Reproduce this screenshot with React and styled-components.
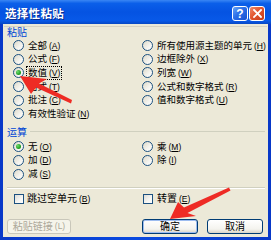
import React from "react";
import styled, { createGlobalStyle } from "styled-components";

const GlobalStyle = createGlobalStyle`
  html, body { margin: 0; padding: 0; background: #fff; }
  body { font-family: "Noto Sans CJK SC", "Noto Sans", sans-serif; }
  * { box-sizing: border-box; }
`;

const Window = styled.div`
  position: relative;
  width: 271px;
  height: 240px;
  display: flex;
  flex-direction: column;
  background: linear-gradient(to right, #0838c8, #0a4ae0 50%, #0838c8);
  overflow: hidden;
`;

const TitleBar = styled.div`
  height: 24px;
  flex: none;
  display: flex;
  align-items: flex-start;
  padding: 0 6px 0 5px;
  background: linear-gradient(#3a86f4 0%, #0b5fe9 14%, #0553e2 50%, #0859e8 86%, #0747c4 100%);
`;

const Title = styled.div`
  flex: 1;
  margin-top: 6px;
  color: #fff;
  font-weight: 700;
  font-size: 11.5px;
  line-height: 14px;
  letter-spacing: 0.3px;
  text-shadow: 1px 1px 0 #0b2a8c;
`;

const CapButton = styled.div`
  width: 16px;
  height: 15px;
  margin-top: 6px;
  margin-left: ${(p) => (p.$gap ? "1px" : "0")};
  border: 1px solid #fff;
  border-radius: 3px;
  display: flex;
  align-items: center;
  justify-content: center;
  color: #fff;
  font-family: "Liberation Sans", sans-serif;
  font-weight: 700;
  font-size: 12px;
  line-height: 1;
  background: ${(p) =>
    p.$close
      ? "linear-gradient(135deg, #f08a6c 0%, #e2562f 45%, #c53a1a 100%)"
      : "linear-gradient(135deg, #6aa5f7 0%, #2b6fe8 45%, #1a4fd0 100%)"};
`;

const Body = styled.div`
  flex: 1;
  margin: 0 3px 3px;
  background: #ece9d8;
  display: flex;
  flex-direction: column;
`;

const TopRule = styled.div`
  height: 1px;
  margin: 2px 1px 0;
  background: #d6d2c2;
`;

const GroupLabel = styled.div`
  margin: ${(p) => p.$top || "0"} 3px 0 4px;
  height: 10px;
  display: flex;
  align-items: center;
  gap: 3px;
  font-size: 10px;
  line-height: 10px;
  color: #0046d5;
  &::after {
    content: "";
    flex: 1;
    height: 1px;
    background: ${(p) => (p.$line ? "#d0d0bf" : "transparent")};
  }
`;

const Columns = styled.div`
  margin-top: ${(p) => p.$top};
  padding-left: ${(p) => p.$left};
  display: grid;
  grid-template-columns: 129px 1fr;
`;

const Column = styled.div`
  display: flex;
  flex-direction: column;
`;

const Row = styled.div`
  height: ${(p) => p.$h || "13.6px"};
  display: flex;
  align-items: center;
  gap: ${(p) => p.$gap || "3px"};
  font-size: ${(p) => p.$size || "9.5px"};
  color: #000;
  white-space: nowrap;
`;

const RadioDot = styled.span`
  flex: none;
  width: 11px;
  height: 11px;
  border-radius: 50%;
  border: 1px solid #1c5180;
  background: linear-gradient(135deg, #dcd9c9 0%, #f4f3ee 60%, #ffffff 100%);
  display: flex;
  align-items: center;
  justify-content: center;
  &::after {
    content: "";
    width: 5px;
    height: 5px;
    border-radius: 50%;
    background: ${(p) =>
      p.$on ? "radial-gradient(circle at 35% 35%, #6fdc6f, #21a121 60%, #1a7a1a)" : "transparent"};
  }
`;

const CheckBox = styled.span`
  flex: none;
  width: 10px;
  height: 10px;
  border: 1px solid #1c5180;
  background: linear-gradient(135deg, #dcdcd7 0%, #f6f6f3 60%, #ffffff 100%);
`;

const Text = styled.span`
  padding: 0 1px;
  line-height: 11px;
  outline: ${(p) => (p.$focus ? "1px dotted #000" : "none")};
`;

const Key = styled.span`
  margin-left: 2px;
  font-family: "Liberation Sans", sans-serif;
  font-size: 8.5px;
  & u { text-decoration-thickness: 1px; text-underline-offset: 1px; }
`;

const Separator = styled.div`
  margin: 6px 3px 0 4px;
  height: 1px;
  background: #d0d0bf;
  box-shadow: 0 1px 0 #fff;
`;

const ButtonRow = styled.div`
  margin-top: 13px;
  padding: 0 5px 0 4px;
  display: flex;
  justify-content: space-between;
`;

const ButtonGroup = styled.div`
  display: flex;
  gap: 9px;
`;

const Button = styled.div`
  width: ${(p) => p.$w};
  height: 15px;
  border: 1px solid ${(p) => (p.$disabled ? "#c9c7ba" : "#003c74")};
  border-radius: 3px;
  background: ${(p) =>
    p.$disabled ? "#f5f4ea" : "linear-gradient(#ffffff 0%, #f4f3ee 70%, #d8d4c8 100%)"};
  box-shadow: ${(p) => (p.$default ? "inset 0 0 0 1px #9dbcf0" : "none")};
  display: flex;
  align-items: center;
  justify-content: center;
  font-size: 10px;
  line-height: 1;
  color: ${(p) => (p.$disabled ? "#aca899" : "#000")};
  white-space: nowrap;
`;

const Overlay = styled.svg`
  position: absolute;
  left: 0;
  top: 0;
  pointer-events: none;
`;

function Label({ text, k, focus }) {
  return (
    <Text $focus={focus}>
      {text}
      {k && (
        <Key>
          (<u>{k}</u>)
        </Key>
      )}
    </Text>
  );
}

function Radio({ text, k, on, focus }) {
  return (
    <Row>
      <RadioDot $on={on} />
      <Label text={text} k={k} focus={focus} />
    </Row>
  );
}

function Check({ text, k, gap }) {
  return (
    <Row $h="14px" $gap={gap} $size="10px">
      <CheckBox />
      <Label text={text} k={k} />
    </Row>
  );
}

const pasteLeft = [
  ["全部", "A"],
  ["公式", "F"],
  ["数值", "V", true],
  ["格式", "T"],
  ["批注", "C"],
  ["有效性验证", "N"],
];
const pasteRight = [
  ["所有使用源主题的单元", "H"],
  ["边框除外", "X"],
  ["列宽", "W"],
  ["公式和数字格式", "R"],
  ["值和数字格式", "U"],
];
const opLeft = [
  ["无", "O", true],
  ["加", "D"],
  ["减", "S"],
];
const opRight = [
  ["乘", "M"],
  ["除", "I"],
];

export default function App() {
  return (
    <>
      <GlobalStyle />
      <Window>
        <TitleBar>
          <Title>选择性粘贴</Title>
          <CapButton>?</CapButton>
          <CapButton $close $gap>
            <svg width="9" height="9" viewBox="0 0 9 9">
              <path d="M1 1L8 8M8 1L1 8" stroke="#fff" strokeWidth="1.8" strokeLinecap="square" />
            </svg>
          </CapButton>
        </TitleBar>
        <Body>
          <TopRule />
          <GroupLabel>粘贴</GroupLabel>
          <Columns $top="2px" $left="10px">
            <Column>
              {pasteLeft.map(([t, k, on]) => (
                <Radio key={t} text={t} k={k} on={on} focus={on} />
              ))}
            </Column>
            <Column>
              {pasteRight.map(([t, k]) => (
                <Radio key={t} text={t} k={k} />
              ))}
            </Column>
          </Columns>
          <GroupLabel $top="6px" $line>
            运算
          </GroupLabel>
          <Columns $top="3.5px" $left="10px">
            <Column>
              {opLeft.map(([t, k, on]) => (
                <Radio key={t} text={t} k={k} on={on} />
              ))}
            </Column>
            <Column>
              {opRight.map(([t, k]) => (
                <Radio key={t} text={t} k={k} />
              ))}
            </Column>
          </Columns>
          <Separator />
          <Columns $top="4px" $left="11px">
            <Check text="跳过空单元" k="B" gap="2px" />
            <Check text="转置" k="E" gap="3px" />
          </Columns>
          <ButtonRow>
            <Button $w="64px" $disabled>
              粘贴链接<Key>(L)</Key>
            </Button>
            <ButtonGroup>
              <Button $w="56px" $default>
                确定
              </Button>
              <Button $w="56px">取消</Button>
            </ButtonGroup>
          </ButtonRow>
        </Body>
        <Overlay width="271" height="240" viewBox="0 0 271 240">
          <polygon
            points="20,76 47,79 39,83.5 72,100 71,103.5 36,87.5 31,94"
            fill="#ee2b24"
          />
          <polygon
            points="170,219 178,202 184,207.5 229,187.5 230.5,190.5 187.5,213 196,216"
            fill="#ee2b24"
          />
        </Overlay>
      </Window>
    </>
  );
}
